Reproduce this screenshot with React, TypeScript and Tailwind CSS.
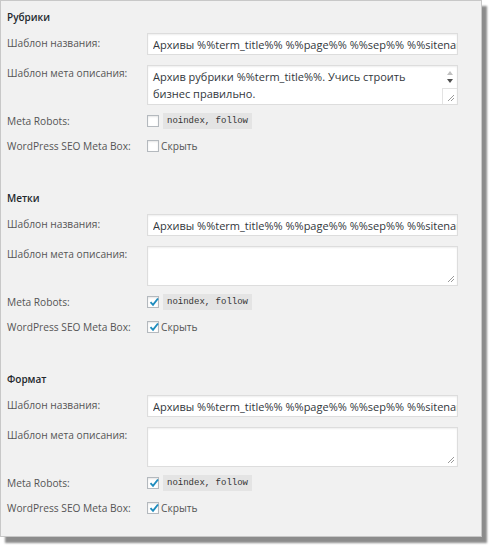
import React from 'react'

const FONT = { fontFamily: '"Open Sans", "Liberation Sans", sans-serif' }

const TITLE_TPL = 'Архивы %%term_title%% %%page%% %%sep%% %%sitename%%'

function Check({ on }: { on: boolean }) {
  return (
    <span className="relative flex h-[12px] w-[12px] shrink-0 items-center justify-center border border-[#b4b9be] bg-white shadow-[inset_0_1px_2px_rgba(0,0,0,0.1)]">
      {on && (
        <svg viewBox="0 0 12 12" className="absolute -top-[1px] left-[0px] h-[12px] w-[12px]">
          <path d="M2.5 6.2 L5 8.8 L10 2.5" fill="none" stroke="#1e8cbe" strokeWidth="1.9" />
        </svg>
      )}
    </span>
  )
}

function Grip() {
  return (
    <svg viewBox="0 0 8 8" className="absolute bottom-[2px] right-[2px] h-[8px] w-[8px]">
      <path d="M7 1 L1 7 M7 4 L4 7" stroke="#9a9a9a" strokeWidth="1" />
    </svg>
  )
}

function Section({
  title,
  desc,
  checked,
  scroll,
}: {
  title: string
  desc?: string[]
  checked: boolean
  scroll?: boolean
}) {
  return (
    <div className="flex flex-col">
      <div className="h-[16px] text-[10px] font-semibold leading-[16px] text-[#23282d]">{title}</div>

      <div className="mt-[8px] flex">
        <div className="w-[140px] pt-[3px] text-[10.2px] leading-[14px] text-[#555]">Шаблон названия:</div>
        <input
          readOnly
          value={TITLE_TPL}
          style={FONT}
          className="h-[22px] w-[311px] border border-[#dddddd] bg-white pl-[5px] text-[11px] leading-[20px] text-[#32373c] shadow-[inset_0_1px_2px_rgba(0,0,0,0.07)] outline-none"
        />
      </div>

      <div className="mt-[10px] flex">
        <div className="w-[140px] pt-[1px] text-[10.2px] leading-[14px] text-[#555]">Шаблон мета описания:</div>
        <div className="relative h-[40px] w-[311px] border border-[#dddddd] bg-white pl-[5px] pt-[2px] text-[11px] leading-[17px] text-[#32373c] shadow-[inset_0_1px_2px_rgba(0,0,0,0.07)]">
          {desc?.map((l) => (
            <div key={l}>{l}</div>
          ))}
          {scroll && (
            <div className="absolute right-0 top-0 flex h-full w-[15px] flex-col items-center">
              <span className="mt-[5px] h-0 w-0 border-x-[3px] border-b-[4px] border-x-transparent border-b-[#c0c0c0]" />
              <span className="mt-[4px] h-0 w-0 border-x-[3px] border-t-[4px] border-x-transparent border-t-[#505050]" />
              <span className="mt-auto h-[16px] w-[15px] border-l border-t border-[#e3e3e3]" />
            </div>
          )}
          <Grip />
        </div>
      </div>

      <div className="mt-[8px] flex items-center">
        <div className="w-[140px] text-[10.2px] leading-[14px] text-[#555]">Meta Robots:</div>
        <Check on={checked} />
        <span
          className="ml-[4px] bg-[#e4e4e4] px-[4px] text-[9px] leading-[16px] text-[#333]"
          style={{ fontFamily: '"Liberation Mono", "DejaVu Sans Mono", monospace' }}
        >
          noindex, follow
        </span>
      </div>

      <div className="mt-[10px] flex items-center">
        <div className="w-[140px] text-[10.2px] leading-[14px] text-[#555]">WordPress SEO Meta Box:</div>
        <Check on={checked} />
        <span className="ml-[2px] text-[10.2px] leading-[14px] text-[#555]">Скрыть</span>
      </div>
    </div>
  )
}

export default function App() {
  return (
    <div className="min-h-[550px] bg-white" style={FONT}>
      <div className="flex h-[537px] w-[482px] flex-col gap-[37px] border border-[#c8c8c8] bg-[#f1f1f1] pl-[6px] pt-[8px] shadow-[5px_6px_2px_rgba(0,0,0,0.45)]">
        <Section
          title="Рубрики"
          desc={['Архив рубрики %%term_title%%. Учись строить', 'бизнес правильно.']}
          checked={false}
          scroll
        />
        <Section title="Метки" checked />
        <Section title="Формат" checked />
      </div>
    </div>
  )
}
